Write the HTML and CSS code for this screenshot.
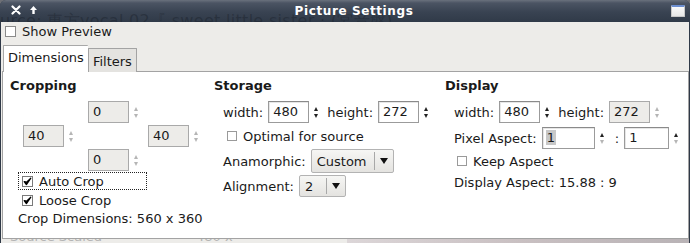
FILE: index.html
```html
<!DOCTYPE html>
<html>
<head>
<meta charset="utf-8">
<link rel="stylesheet" href="styles.css">
</head>
<body>
<div class="window">
  <div class="titlebar">
    <div class="ghost">urce: 東方vocal 02『 sweet little sister · (宮音盤)</div>
    <div class="tb-left">
      <svg class="tb-icon" width="10" height="10" viewBox="0 0 10 10"><path d="M1.5 1.5 L8.5 8.5 M8.5 1.5 L1.5 8.5" stroke="#fff" stroke-width="2.2" stroke-linecap="round"/></svg>
      <svg class="tb-icon" width="9" height="10" viewBox="0 0 9 10"><path d="M4.5 1 L1 5 H3.3 V9 H5.7 V5 H8 Z" fill="#fff"/></svg>
    </div>
    <div class="title">Picture Settings</div>
    <div class="tb-right"><span class="winicon"></span></div>
  </div>
  <div class="content">
    <div class="check preview"><span class="box"></span><span>Show Preview</span></div>
    <div class="tabs">
      <div class="tab active">Dimensions</div>
      <div class="tab">Filters</div>
    </div>
    <div class="panel">
      <section class="sec crop">
        <div class="heading">Cropping</div>
        <div class="cropgrid">
          <div class="spin c-top"><span class="entry dis">0</span><span class="arrows dis"><i class="up"></i><i class="down"></i></span></div>
          <div class="spin c-left"><span class="entry dis">40</span><span class="arrows dis"><i class="up"></i><i class="down"></i></span></div>
          <div class="spin c-right"><span class="entry dis">40</span><span class="arrows dis"><i class="up"></i><i class="down"></i></span></div>
          <div class="spin c-bottom"><span class="entry dis">0</span><span class="arrows dis"><i class="up"></i><i class="down"></i></span></div>
        </div>
        <div class="check checked focus"><span class="box"><svg width="9" height="9" viewBox="0 0 9 9"><path d="M1.2 4.6 L3.4 7.6 L7.8 1.2 L3.6 5.2 Z" fill="#000" stroke="#000" stroke-width="1.3" stroke-linejoin="round"/></svg></span><span>Auto Crop</span></div>
        <div class="check checked loose"><span class="box"><svg width="9" height="9" viewBox="0 0 9 9"><path d="M1.2 4.6 L3.4 7.6 L7.8 1.2 L3.6 5.2 Z" fill="#000" stroke="#000" stroke-width="1.3" stroke-linejoin="round"/></svg></span><span>Loose Crop</span></div>
        <div class="info crop-info">Crop Dimensions: 560 x 360</div>
      </section>
      <section class="sec storage">
        <div class="heading">Storage</div>
        <div class="row r1">
          <span class="lbl">width:</span>
          <div class="spin"><span class="entry">480</span><span class="arrows"><i class="up"></i><i class="down"></i></span></div>
          <span class="lbl">height:</span>
          <div class="spin"><span class="entry">272</span><span class="arrows"><i class="up"></i><i class="down"></i></span></div>
        </div>
        <div class="check light opt"><span class="box"></span><span>Optimal for source</span></div>
        <div class="row r3">
          <span class="lbl">Anamorphic:</span>
          <div class="combo"><span class="ctext">Custom</span><span class="csep"></span><span class="carrow"></span></div>
        </div>
        <div class="row r4">
          <span class="lbl">Alignment:</span>
          <div class="combo small"><span class="ctext">2</span><span class="csep"></span><span class="carrow"></span></div>
        </div>
      </section>
      <section class="sec display">
        <div class="heading">Display</div>
        <div class="row r1">
          <span class="lbl">width:</span>
          <div class="spin"><span class="entry">480</span><span class="arrows"><i class="up"></i><i class="down"></i></span></div>
          <span class="lbl">height:</span>
          <div class="spin"><span class="entry dis">272</span><span class="arrows dis"><i class="up"></i><i class="down"></i></span></div>
        </div>
        <div class="row r2">
          <span class="lbl">Pixel Aspect:</span>
          <div class="spin wide"><span class="entry"><span class="sel">1</span></span><span class="arrows half"><i class="up"></i><i class="down"></i></span></div>
          <span class="lbl colon">:</span>
          <div class="spin wide2"><span class="entry">1</span><span class="arrows half"><i class="up"></i><i class="down"></i></span></div>
        </div>
        <div class="check light keep"><span class="box"></span><span>Keep Aspect</span></div>
        <div class="info disp-info">Display Aspect: 15.88 : 9</div>
      </section>
    </div>
    <div class="under"><span class="u1">Source Scaled</span><span class="u2">480 x</span><span class="u3"></span></div>
  </div>
</div>
</body>
</html>
```
FILE: styles.css
```css
* { box-sizing: border-box; }
html, body { margin: 0; padding: 0; }
body {
  width: 690px;
  height: 243px;
  background: #6d6f75;
  font-family: "DejaVu Sans", sans-serif;
  font-size: 12px;
  color: #1a1a1a;
  overflow: hidden;
}
.window {
  width: 690px;
  height: 243px;
  display: flex;
  flex-direction: column;
  border-radius: 6px 6px 0 0;
  overflow: hidden;
  background: #2f3947;
}
.titlebar {
  position: relative;
  height: 22px;
  flex: none;
  background: linear-gradient(#6a717d 0px, #4b5463 3px, #394352 12px, #303a48 22px);
  display: flex;
  align-items: center;
  overflow: hidden;
}
.ghost {
  position: absolute;
  left: 0;
  top: 11px;
  font-size: 16px;
  color: rgba(22, 28, 38, 0.38);
  white-space: nowrap;
  letter-spacing: 0.3px;
}
.tb-left {
  position: relative;
  display: flex;
  gap: 8px;
  padding-left: 11px;
  align-items: center;
  width: 120px;
  padding-bottom: 2px;
}
.title {
  position: relative;
  flex: 1;
  text-align: center;
  color: #fff;
  font-weight: bold;
  font-size: 12px;
  letter-spacing: 0.6px;
  padding-left: 18px;
  padding-bottom: 1px;
}
.tb-right {
  position: relative;
  width: 120px;
  display: flex;
  justify-content: flex-end;
  padding-right: 5px;
  align-self: flex-start;
  padding-top: 5px;
}
.winicon {
  display: block;
  width: 14px;
  height: 12px;
  background: linear-gradient(#fafafa, #e6e6e6);
  border: 1px solid #c8c8c8;
  border-top: 2px solid #6c8ed0;
  border-radius: 1px;
}
.content {
  flex: 1;
  background: #edece9;
  margin: 0 1px;
  display: flex;
  flex-direction: column;
  padding: 0 0 0 1px;
}
.check {
  display: flex;
  align-items: center;
  gap: 6px;
  height: 16px;
}
.check .box {
  width: 11px;
  height: 11px;
  border: 1px solid #7a7a7a;
  background: #fff;
  display: flex;
  align-items: center;
  justify-content: center;
  flex: none;
}
.check.light .box { border-color: #9a9a9a; width: 10px; height: 10px; }
.preview {
  margin-top: 1px;
  padding-left: 3px;
  font-size: 13px;
  height: 17px;
}
.preview .box { width: 11px; height: 11px; border-color: #8a8a8a; }
.tabs {
  display: flex;
  align-items: flex-end;
  margin-top: 5px;
  padding-left: 1px;
  height: 27px;
  position: relative;
  z-index: 1;
}
.tab {
  font-size: 13px;
  height: 24px;
  padding: 2px 4px 0;
  border: 1px solid #a3a3a3;
  border-bottom: none;
  background: #e4e3e0;
  display: flex;
  align-items: center;
  border-radius: 1px 1px 0 0;
}
.tab.active {
  height: 27px;
  background: #fff;
  padding: 0 4px 3px;
  border-right: none;
  border-color: #a8a8a8;
}
.panel {
  margin-top: -1px;
  width: 687px;
  height: 168px;
  background: #fff;
  border: 1px solid #a3a3a3;
  display: flex;
  padding: 6px 0 0 7px;
}
.sec { display: flex; flex-direction: column; }
.heading { font-weight: bold; font-size: 13px; height: 16px; line-height: 16px; }
.crop { width: 204px; }
.storage { width: 231px; }
.display { flex: 1; }

.spin { display: flex; height: 22px; }
.entry {
  width: 41px;
  height: 22px;
  border: 1px solid #9b9b9b;
  border-top-color: #8a8a8a;
  background: #fff;
  padding-left: 4px;
  line-height: 20px;
  font-size: 13px;
  box-shadow: inset 1px 1px 0 #e6e6e6;
}
.entry.dis { background: #edece9; border-color: #a9a9a9; box-shadow: none; }
.arrows {
  width: 14px;
  display: flex;
  flex-direction: column;
  align-items: center;
  justify-content: center;
  gap: 3px;
}
.arrows i { display: block; width: 0; height: 0; border-left: 2.5px solid transparent; border-right: 2.5px solid transparent; }
.arrows .up { border-bottom: 4px solid #222; }
.arrows .down { border-top: 4px solid #222; }
.arrows.dis .up { border-bottom-color: #b5b5b5; }
.arrows.dis .down { border-top-color: #b5b5b5; }
.arrows.half .down { border-top-color: #b5b5b5; }
.wide .entry { width: 53px; }
.wide2 .entry { width: 45px; }
.sel { background: #c8c8c8; padding: 0 1px; margin-left: -1px; }

.cropgrid {
  margin-top: 7px;
  display: grid;
  grid-template-columns: 65px 60px 55px;
  grid-template-rows: 22px 22px 22px;
  row-gap: 2px;
  margin-left: 13px;
}
.c-top { grid-column: 2; grid-row: 1; }
.c-left { grid-column: 1; grid-row: 2; }
.c-right { grid-column: 3; grid-row: 2; }
.c-bottom { grid-column: 2; grid-row: 3; }

.crop .check { font-size: 13px; padding-left: 3px; margin-left: 8px; }
.focus {
  margin-top: 1px;
  width: 129px;
  height: 18px !important;
  border: 1px dotted #222;
}
.loose { margin-top: 2px; height: 17px !important; padding-left: 4px !important; }
.info { font-size: 13px; }
.crop-info { margin-top: 2px; margin-left: 8px; }

.row { display: flex; align-items: center; font-size: 13px; }
.row .lbl { margin-right: 5px; }
.storage .row, .display .row { padding-left: 9px; }
.r1 { margin-top: 7px; height: 22px; }
.r1 .spin + .lbl { margin-left: 4px; }
.opt { margin-top: 5px; padding-left: 13px; font-size: 13px; }
.r3 { margin-top: 5px; height: 24px; }
.r4 { margin-top: 2px; height: 22px; }
.r2 { margin-top: 4px; height: 22px; }
.r2 .colon { margin: 0 5px 0 6px; }
.keep { margin-top: 4px; padding-left: 12px; font-size: 13px; }
.disp-info { margin-top: 6px; padding-left: 9px; }

.combo {
  display: flex;
  align-items: center;
  height: 24px;
  border: 1px solid #b3b3b3;
  border-radius: 2px;
  background: linear-gradient(#f6f6f4, #e4e3e0);
  padding: 0 5px 0 5px;
}
.combo.small { height: 22px; }
.ctext { padding-right: 7px; }
.combo.small .ctext { padding-right: 13px; }
.csep { width: 1px; align-self: stretch; margin: 2px 0; background: #a8a8a8; }
.carrow {
  width: 0; height: 0;
  margin-left: 5px;
  border-left: 4px solid transparent;
  border-right: 4px solid transparent;
  border-top: 6px solid #111;
}

.under {
  flex: 1;
  position: relative;
  overflow: hidden;
  display: flex;
  font-size: 13px;
  color: #b4b4b4;
  border-bottom: 1px solid #2f3947;
}
.u1 { margin-left: 8px; margin-top: -10px; }
.u2 { margin-left: 94px; margin-top: -10px; }
.u3 { position: absolute; left: 345px; right: 0; top: 0; bottom: 0; background: linear-gradient(90deg, #dcd6d8, #c9c0c2 50%, #b9b3b6); }
```
